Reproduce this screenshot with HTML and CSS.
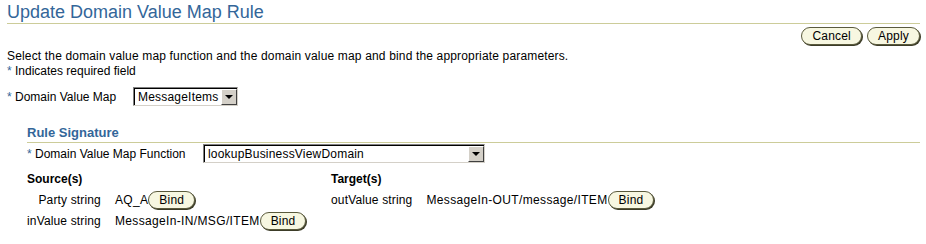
FILE: index.html
```html
<!DOCTYPE html>
<html lang="en">
<head>
    <meta charset="UTF-8">
    <title>Update Domain Value Map Rule</title>
    <link rel="stylesheet" href="styles.css">
</head>
<body>
    <div class="page">
        <h1 class="page-title">Update Domain Value Map Rule</h1>
        <div class="actions">
            <button class="btn">Cancel</button>
            <button class="btn">Apply</button>
        </div>
        <p class="intro">Select the domain value map function and the domain value map and bind the appropriate parameters.</p>
        <p class="required-note"><span class="req">*</span> Indicates required field</p>

        <div class="field-row dvm-row">
            <label class="field-label"><span class="req">*</span> Domain Value Map</label>
            <span class="select dvm-select">
                <span class="select-value">MessageItems</span>
                <span class="select-arrow"></span>
            </span>
        </div>

        <div class="section">
            <h2 class="section-title">Rule Signature</h2>
            <div class="field-row func-row">
                <label class="field-label"><span class="req">*</span> Domain Value Map Function</label>
                <span class="select func-select">
                    <span class="select-value">lookupBusinessViewDomain</span>
                    <span class="select-arrow"></span>
                </span>
            </div>

            <div class="params">
                <div class="param-col sources">
                    <h3 class="col-title">Source(s)</h3>
                    <table class="param-table">
                        <tr>
                            <td class="param-name">Party string</td>
                            <td class="param-value">AQ_A<button class="btn">Bind</button></td>
                        </tr>
                        <tr>
                            <td class="param-name">inValue string</td>
                            <td class="param-value">MessageIn-IN/MSG/ITEM<button class="btn">Bind</button></td>
                        </tr>
                    </table>
                </div>
                <div class="param-col targets">
                    <h3 class="col-title">Target(s)</h3>
                    <table class="param-table">
                        <tr>
                            <td class="param-name">outValue string</td>
                            <td class="param-value">MessageIn-OUT/message/ITEM<button class="btn">Bind</button></td>
                        </tr>
                    </table>
                </div>
            </div>
        </div>
    </div>
</body>
</html>
```

FILE: styles.css
```css
* {
    margin: 0;
    padding: 0;
    box-sizing: border-box;
}

body {
    background: #ffffff;
    color: #000000;
    font-family: 'Liberation Sans', Arial, sans-serif;
    font-size: 12px;
}

.page {
    padding: 2px 6px 0 7px;
}

.page-title {
    font-size: 18px;
    font-weight: normal;
    color: #336699;
    line-height: 20px;
    border-bottom: 1px solid #cccc99;
    padding-bottom: 1px;
}

.actions {
    display: flex;
    justify-content: flex-end;
    gap: 5px;
    margin-top: 3px;
    height: 19px;
}

.btn {
    font-family: 'Liberation Sans', Arial, sans-serif;
    font-size: 12px;
    letter-spacing: 0.2px;
    color: #000000;
    background: #f7f7e1;
    border: 1px solid #5a5a3c;
    border-radius: 9px;
    box-shadow: 1px 1px 0 #3c3c28;
    height: 18px;
    padding: 0 10px;
    line-height: 16px;
    cursor: pointer;
}

.intro {
    margin-top: 2px;
    line-height: 16px;
    letter-spacing: 0.16px;
}

.required-note {
    line-height: 15px;
}

.req {
    color: #336699;
}

.field-row {
    display: flex;
    align-items: center;
}

.dvm-row {
    margin-top: 8px;
}

.dvm-row .field-label {
    width: 126px;
}

.select {
    display: inline-flex;
    align-items: stretch;
    height: 19px;
    background: #ffffff;
    border-top: 1px solid #808080;
    border-left: 1px solid #808080;
    border-right: 1px solid #d4d0c8;
    border-bottom: 1px solid #d4d0c8;
    box-shadow: inset 1px 1px 0 #000000;
}

.select-value {
    flex: 1;
    padding: 1px 3px 0 4px;
    line-height: 16px;
    letter-spacing: 0.2px;
}

.select-arrow {
    width: 16px;
    margin: 1px 0 0 0;
    background: #d4d0c8;
    border-top: 1px solid #ffffff;
    border-left: 1px solid #ffffff;
    border-right: 1px solid #404040;
    border-bottom: 1px solid #404040;
    display: flex;
    align-items: center;
    justify-content: center;
}

.select-arrow::after {
    content: "";
    border-left: 4px solid transparent;
    border-right: 4px solid transparent;
    border-top: 4px solid #000000;
}

.dvm-select {
    width: 105px;
}

.section {
    margin-left: 20px;
    margin-top: 19px;
}

.section-title {
    font-size: 13px;
    font-weight: bold;
    color: #336699;
    line-height: 16px;
    border-bottom: 1px solid #cccc99;
    padding-bottom: 1px;
}

.func-row {
    margin-top: 1px;
}

.func-row .field-label {
    width: 176px;
}

.func-select {
    width: 282px;
}

.params {
    display: flex;
    margin-top: 9px;
}

.param-col {
    display: flex;
    flex-direction: column;
    align-items: flex-start;
}

.sources {
    width: 304px;
}

.col-title {
    font-size: 12px;
    font-weight: bold;
    line-height: 15px;
    margin-bottom: 4px;
}

.param-table {
    border-collapse: collapse;
}

.param-table td {
    padding: 0 0 3px 0;
    vertical-align: middle;
    white-space: nowrap;
}

.param-name {
    text-align: right;
    letter-spacing: 0.15px;
    padding-right: 14px !important;
}

.param-value {
    letter-spacing: 0.35px;
}
```
